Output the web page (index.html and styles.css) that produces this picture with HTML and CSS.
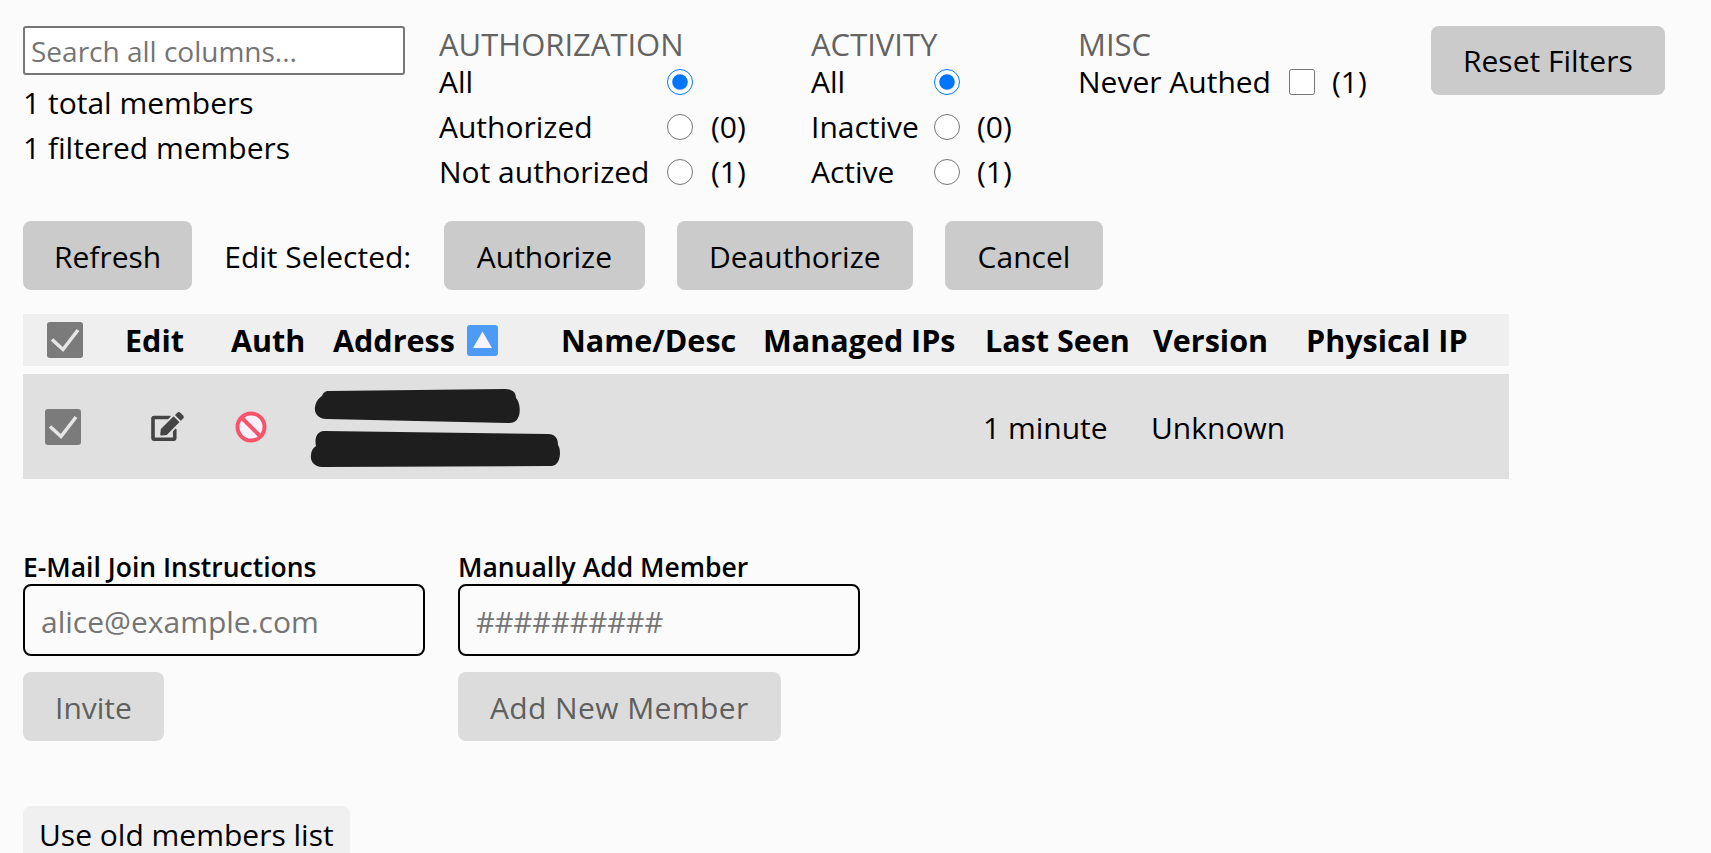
FILE: index.html
```html
<!DOCTYPE html>
<html>
<head>
  <title>Members</title>
  <link rel="stylesheet" href="styles.css">
</head>
<body>

  <div class="filters">
    <div class="search">
      <input class="search-box" placeholder="Search all columns...">
      <div class="total">1 total members</div>
      <div class="total">1 filtered members</div>
    </div>

    <div class="group auth-group">
      <div class="group-title">AUTHORIZATION</div>
      <label>All</label><input type="radio" name="auth" checked><span></span>
      <label>Authorized</label><input type="radio" name="auth"><span>(0)</span>
      <label>Not authorized</label><input type="radio" name="auth"><span>(1)</span>
    </div>

    <div class="group activity-group">
      <div class="group-title">ACTIVITY</div>
      <label>All</label><input type="radio" name="activity" checked><span></span>
      <label>Inactive</label><input type="radio" name="activity"><span>(0)</span>
      <label>Active</label><input type="radio" name="activity"><span>(1)</span>
    </div>

    <div class="group misc-group">
      <div class="group-title">MISC</div>
      <label>Never Authed</label><input type="checkbox"><span>(1)</span>
    </div>

    <div><button class="btn reset">Reset Filters</button></div>
  </div>

  <div class="actions">
    <button class="btn refresh">Refresh</button>
    <span class="edit-label">Edit Selected:</span>
    <button class="btn">Authorize</button>
    <button class="btn">Deauthorize</button>
    <button class="btn">Cancel</button>
  </div>

  <div class="members">
    <div class="cols head">
      <span class="check">
        <svg viewBox="0 0 36 36" width="36" height="36"><path d="M5 17.5l11 10L31 8" class="tick"/></svg>
      </span>
      <span>Edit</span>
      <span>Auth</span>
      <span class="address-head">Address
        <svg class="sort" viewBox="0 0 31 31" width="31" height="31">
          <rect width="31" height="31" rx="3" fill="#4c9cf7"/>
          <path d="M15.5 6.5L25 23H6z" fill="#f8f3ff"/>
        </svg>
      </span>
      <span>Name/Desc</span>
      <span>Managed IPs</span>
      <span>Last Seen</span>
      <span>Version</span>
      <span>Physical IP</span>
    </div>

    <div class="cols row">
      <span class="check">
        <svg viewBox="0 0 36 36" width="36" height="36"><path d="M5 17.5l11 10L31 8" class="tick"/></svg>
      </span>
      <span class="edit-cell">
        <svg viewBox="0 0 576 512" width="33" height="29" fill="#444"><path d="M402.6 83.2l90.2 90.2c3.8 3.8 3.8 10 0 13.8L274.4 405.6l-92.8 10.3c-12.4 1.4-22.9-9.1-21.5-21.5l10.3-92.8L388.8 83.2c3.8-3.8 10-3.8 13.8 0zm162-22.9l-48.8-48.8c-15.2-15.2-39.9-15.2-55.2 0l-35.4 35.4c-3.8 3.8-3.8 10 0 13.8l90.2 90.2c3.8 3.8 10 3.8 13.8 0l35.4-35.4c15.2-15.3 15.2-40 0-55.2zM384 346.2V448H64V128h229.8c3.2 0 6.2-1.3 8.5-3.5l40-40c7.6-7.6 2.2-20.5-8.5-20.5H48C21.5 64 0 85.5 0 112v352c0 26.5 21.5 48 48 48h352c26.5 0 48-21.5 48-48V306.2c0-10.7-12.9-16-20.5-8.5l-40 40c-2.2 2.3-3.5 5.3-3.5 8.5z"/></svg>
      </span>
      <span class="auth-cell">
        <svg viewBox="0 0 32 32" width="32" height="32">
          <circle cx="16" cy="16" r="13.5" fill="#f8f2ff" stroke="#f9546c" stroke-width="4"/>
          <path d="M7 7l18 18" stroke="#f9546c" stroke-width="4"/>
        </svg>
      </span>
      <span class="address-cell">
        <svg viewBox="0 0 252 84" width="252" height="84" fill="#1e1e1e">
          <path d="M19 6L195 4C203 4 206 8 206 13C210 17 211 28 208 33C206 37 203 38 198 38L16 34C8 34 4 28 5 22C6 16 9 13 12 11C13 8 15 6 19 6z"/>
          <path d="M14 46L238 49C245 49 248 53 248 60C251 64 251 76 245 80C243 81 241 81 238 81L12 82C4 82 0 76 1 70C1 66 3 63 6 61C4 52 8 46 14 46z"/>
        </svg>
      </span>
      <span></span>
      <span></span>
      <span class="row-text">1 minute</span>
      <span class="row-text">Unknown</span>
      <span></span>
    </div>
  </div>

  <div class="add-forms">
    <div class="add-form">
      <div class="add-title">E-Mail Join Instructions</div>
      <input class="add-input" placeholder="alice@example.com">
      <div><button class="btn off">Invite</button></div>
    </div>
    <div class="add-form">
      <div class="add-title">Manually Add Member</div>
      <input class="add-input hashes" placeholder="##########">
      <div><button class="btn off wide">Add New Member</button></div>
    </div>
  </div>

  <button class="old-list">Use old members list</button>

</body>
</html>
```

FILE: styles.css
```css
html, body {
  overflow: hidden;
}
body {
  margin: 0;
  padding: 26px 23px 0;
  background: #fbfbfb;
  color: #000;
  font-family: "Open Sans", "Noto Sans", Arial, sans-serif;
  font-size: 30px;
  line-height: 45px;
}
button, input {
  font-family: inherit;
  font-size: 30px;
}
input::placeholder {
  color: #757575;
  opacity: 1;
}

.filters {
  display: grid;
  grid-template-columns: 416px 372px 267px 353px auto;
  height: 195px;
}
.search-box {
  display: block;
  box-sizing: border-box;
  width: 382px;
  height: 49px;
  margin-bottom: 5px;
  padding: 0 6px;
  background: #fff;
  border: 2px solid #767676;
  border-radius: 3px;
  font-size: 28px;
}

.group {
  display: grid;
  grid-template-rows: 33px;
  grid-auto-rows: 45px;
  align-content: start;
  align-items: center;
}
.group label, .group span {
  line-height: 36px;
}
.auth-group {
  grid-template-columns: 228px 44px auto;
}
.activity-group {
  grid-template-columns: 123px 43px auto;
}
.misc-group {
  grid-template-columns: 211px 43px auto;
}
.group-title {
  grid-column: 1 / -1;
  box-sizing: border-box;
  height: 33px;
  padding-top: 4px;
  color: #636363;
  font-size: 31px;
  line-height: 29px;
}
.group input {
  width: 26px;
  height: 26px;
  margin: 0;
}

.btn {
  height: 69px;
  padding: 0 32px;
  background: #cbcbcb;
  color: #000;
  border: none;
  border-radius: 8px;
}
.btn.off {
  padding-top: 2px;
  background: #dcdcdc;
  color: #5f5f5f;
}
.btn.wide {
  letter-spacing: 0.4px;
}

.actions {
  display: flex;
  align-items: center;
  gap: 32px;
}
.actions .btn {
  padding: 2px 32.5px 0;
}
.actions .refresh {
  padding-left: 31px;
  padding-right: 31px;
}
.edit-label {
  width: 188px;
  padding-top: 2px;
  white-space: nowrap;
}

.members {
  width: 1486px;
  margin-top: 24px;
}
.cols {
  display: grid;
  grid-template-columns: 78px 106px 102px 228px 202px 222px 168px 153px auto;
  align-items: center;
}
.head {
  height: 52px;
  padding-left: 24px;
  background: #efefef;
  font-size: 30.5px;
  font-weight: 700;
}
.row {
  height: 105px;
  margin-top: 8px;
  padding-left: 22px;
  background: #e0e0e0;
}
.row-text {
  padding-top: 2px;
}
.check {
  display: block;
  width: 36px;
  height: 36px;
  background: #7b7b7b;
  border-radius: 3px;
}
.check svg {
  display: block;
}
.tick {
  fill: none;
  stroke: #e6e6e6;
  stroke-width: 3.5;
}
.address-head {
  display: flex;
  align-items: center;
  gap: 12px;
}
.edit-cell {
  padding-left: 28px;
  height: 29px;
  line-height: 0;
}
.auth-cell {
  padding-left: 6px;
  height: 32px;
  line-height: 0;
}
.address-cell {
  margin-left: -21px;
  height: 84px;
  line-height: 0;
}

.add-forms {
  display: flex;
  gap: 33px;
  margin-top: 72px;
}
.add-form {
  width: 402px;
}
.add-title {
  font-size: 26.5px;
  font-weight: 600;
  line-height: 33px;
}
.add-input {
  display: block;
  box-sizing: border-box;
  width: 100%;
  height: 72px;
  margin-bottom: 16px;
  padding: 2px 16px 0;
  background: #fbfbfb;
  border: 2px solid #000;
  border-radius: 8px;
}
.hashes {
  font-size: 29px;
}

.old-list {
  display: block;
  height: 56px;
  margin-top: 65px;
  padding: 0 16px;
  background: #f0f0f0;
  color: #000;
  border: none;
  border-radius: 8px;
}
```
